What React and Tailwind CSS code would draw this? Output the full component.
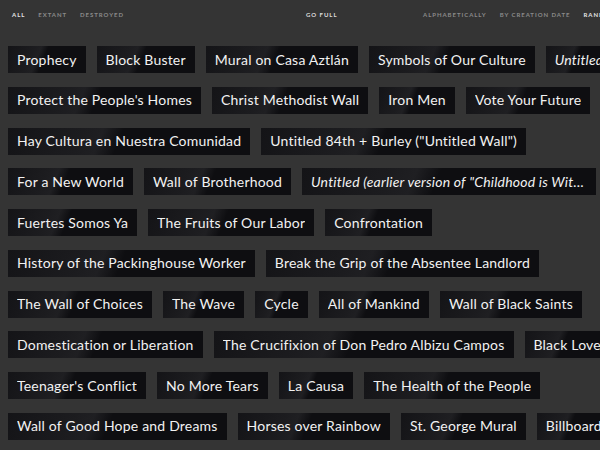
const rows = [
  ['Prophecy', 'Block Buster', 'Mural on Casa Aztlán', 'Symbols of Our Culture', { t: 'Untitled', i: true }],
  ["Protect the People's Homes", 'Christ Methodist Wall', 'Iron Men', 'Vote Your Future'],
  ['Hay Cultura en Nuestra Comunidad', 'Untitled 84th + Burley ("Untitled Wall")'],
  ['For a New World', 'Wall of Brotherhood', { t: 'Untitled (earlier version of "Childhood is Without Prejudice")', i: true }],
  ['Fuertes Somos Ya', 'The Fruits of Our Labor', 'Confrontation'],
  ['History of the Packinghouse Worker', 'Break the Grip of the Absentee Landlord'],
  ['The Wall of Choices', 'The Wave', 'Cycle', 'All of Mankind', 'Wall of Black Saints'],
  ['Domestication or Liberation', 'The Crucifixion of Don Pedro Albizu Campos', 'Black Love'],
  ["Teenager's Conflict", 'No More Tears', 'La Causa', 'The Health of the People'],
  ['Wall of Good Hope and Dreams', 'Horses over Rainbow', 'St. George Mural', 'Billboard'],
]

function Chip({ item }) {
  const text = typeof item === 'string' ? item : item.t
  const italic = typeof item !== 'string' && item.i
  return (
    <div
      className={`shrink-0 h-[27px] px-[9px] flex items-center text-[14px] tracking-[0.2px] leading-none text-[#f2f2f2] whitespace-nowrap bg-[linear-gradient(112deg,#141417_0%,#1c1c1f_30%,#1f1f22_38%,#0e0e11_46%,#0e0e11_100%)] ${italic ? 'italic max-w-[294px]' : ''}`}
    >
      <span className="truncate">{text}</span>
    </div>
  )
}

export default function App() {
  return (
    <div className="w-[600px] h-[450px] overflow-hidden bg-[#343434] font-['Lato',sans-serif]">
      <div className="flex items-center h-[29px] whitespace-nowrap text-[6px] font-bold tracking-[0.16em] uppercase">
        <div className="w-[306px] shrink-0 pl-[12px] flex gap-[13px]">
          <span className="text-[#e6e6e6]">All</span>
          <span className="text-[#8a8a8a]">Extant</span>
          <span className="text-[#8a8a8a]">Destroyed</span>
        </div>
        <div className="w-[117px] shrink-0 text-[#dcdcdc]">Go Full</div>
        <div className="flex gap-[13px] text-[#8a8a8a]">
          <span>Alphabetically</span>
          <span>By Creation Date</span>
          <span className="text-[#e6e6e6]">Random</span>
        </div>
      </div>
      <div className="pt-[17px] pl-[8px] flex flex-col gap-y-[13.75px]">
        {rows.map((row, r) => (
          <div key={r} className="flex gap-x-[11px]">
            {row.map((item, i) => (
              <Chip key={i} item={item} />
            ))}
          </div>
        ))}
      </div>
    </div>
  )
}
